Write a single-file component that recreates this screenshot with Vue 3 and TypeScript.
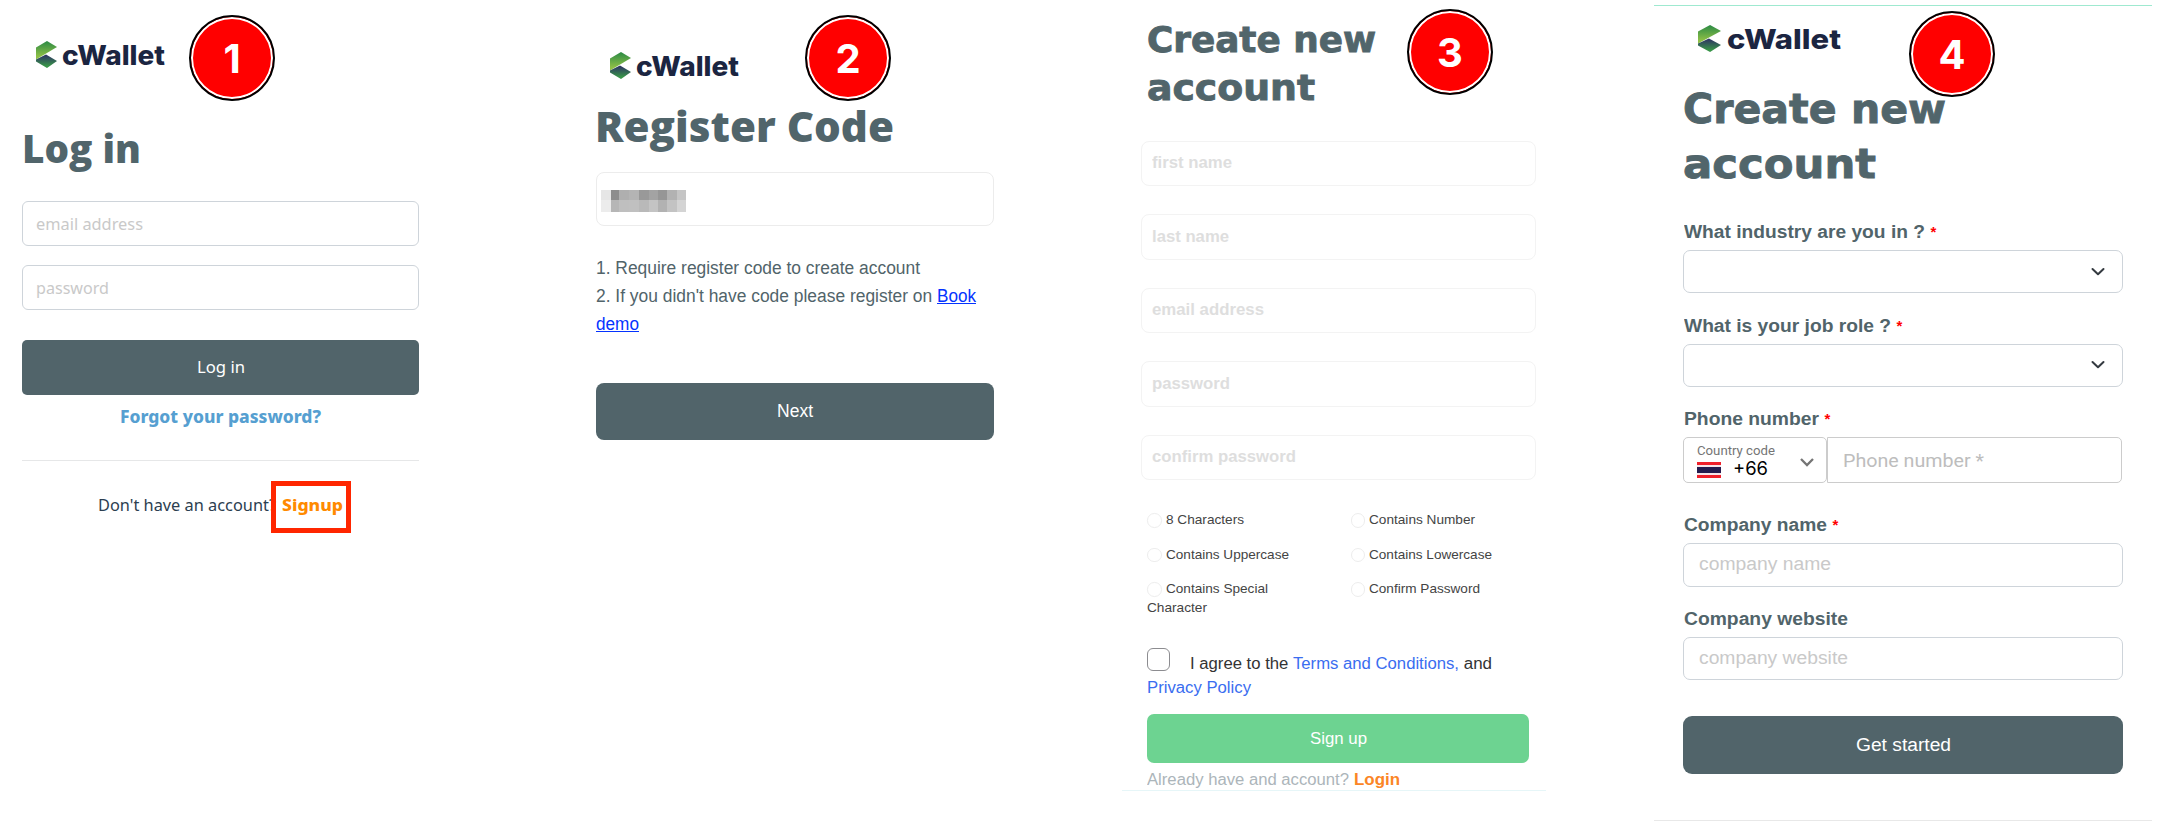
<script setup lang="ts">
import type { Directive } from 'vue'

interface Field {
  label: string
  width: number
}

/* Condenses or widens a line of text to the given advance width. */
const vFit: Directive<HTMLElement, number> = {
  mounted(el, binding) {
    const natural = el.getBoundingClientRect().width
    el.style.width = `${binding.value}px`
    el.style.transform = `scaleX(${binding.value / natural})`
  },
}

const signupFields: Field[] = [
  { label: 'first name', width: 80 },
  { label: 'last name', width: 77 },
  { label: 'email address', width: 112 },
  { label: 'password', width: 78 },
  { label: 'confirm password', width: 144 },
]

const rules: Field[][] = [
  [{ label: '8 Characters', width: 78 }, { label: 'Contains Number', width: 106 }],
  [{ label: 'Contains Uppercase', width: 123 }, { label: 'Contains Lowercase', width: 123 }],
  [{ label: 'Contains Special', width: 102 }, { label: 'Confirm Password', width: 111 }],
]

const questions: Field[] = [
  { label: 'What industry are you in ?', width: 241 },
  { label: 'What is your job role ?', width: 207 },
]

const mosaic: string[] = [
  '#e6e6e6', '#8d8d8d', '#afafaf', '#b4b4b4', '#999999', '#a3a3a3', '#969696', '#b2b2b2', '#c5c5c5',
  '#ececec', '#b6b6b6', '#bfbfbf', '#c0c0c0', '#b9b9b9', '#c4c4c4', '#b2b2b2', '#c3c3c3', '#d4d4d4',
]
</script>

<template>
  <svg class="defs" width="0" height="0">
    <defs>
      <linearGradient id="leaf" x1="0" y1="0" x2="0" y2="1">
        <stop offset="0" stop-color="#2b8a45" />
        <stop offset="0.85" stop-color="#8fc046" />
      </linearGradient>
      <linearGradient id="base" x1="0" y1="0" x2="0" y2="1">
        <stop offset="0.1" stop-color="#2f3a62" />
        <stop offset="0.85" stop-color="#389448" />
      </linearGradient>
      <symbol id="mark" viewBox="0 0 21 27" preserveAspectRatio="none">
        <path d="M11 0 21 6 0 18.500V6.500Z" fill="url(#leaf)" />
        <path d="M10 13.500 21 20 11 27 0 20.500V18.500Z" fill="url(#base)" />
      </symbol>
    </defs>
  </svg>
  <main class="board">
    <section class="panel login">
      <div class="logo">
        <svg class="mark"><use href="#mark" /></svg>
        <span v-fit="103" class="fit brand">cWallet</span>
      </div>
      <div class="badge">1</div>
      <h1><span v-fit="119" class="fit">Log in</span></h1>
      <div class="field"><span v-fit="107" class="fit">email address</span></div>
      <div class="field"><span v-fit="73" class="fit">password</span></div>
      <button class="btn"><span v-fit="48" class="fit">Log in</span></button>
      <a class="forgot"><span v-fit="201" class="fit">Forgot your password?</span></a>
      <hr>
      <p class="ask">
        <span v-fit="178" class="fit">Don't have an account?</span>
        <b v-fit="61" class="fit">Signup</b>
      </p>
      <div class="highlight"></div>
    </section>

    <section class="panel register">
      <div class="logo">
        <svg class="mark"><use href="#mark" /></svg>
        <span v-fit="103" class="fit brand">cWallet</span>
      </div>
      <div class="badge">2</div>
      <h1><span v-fit="299" class="fit">Register Code</span></h1>
      <div class="code">
        <div class="mosaic">
          <i v-for="(shade, n) in mosaic" :key="n" :style="{ background: shade }"></i>
        </div>
      </div>
      <div class="notes">
        <div><span v-fit="324" class="fit">1. Require register code to create account</span></div>
        <div>
          <span v-fit="341" class="fit">2. If you didn't have code please register on </span><a v-fit="39" class="fit">Book</a>
        </div>
        <div><a v-fit="43" class="fit">demo</a></div>
      </div>
      <button class="btn"><span v-fit="36" class="fit">Next</span></button>
    </section>

    <section class="panel signup">
      <div class="badge">3</div>
      <h1>
        <span v-fit="229" class="fit">Create new</span><br>
        <span v-fit="168" class="fit">account</span>
      </h1>
      <div class="fields">
        <div v-for="f in signupFields" :key="f.label" class="field">
          <span v-fit="f.width" class="fit">{{ f.label }}</span>
        </div>
      </div>
      <div class="rules">
        <template v-for="(row, r) in rules" :key="r">
          <div v-for="rule in row" :key="rule.label" class="rule">
            <i class="dot"></i><span v-fit="rule.width" class="fit">{{ rule.label }}</span>
          </div>
        </template>
        <div class="wrapped"><span v-fit="60" class="fit">Character</span></div>
      </div>
      <div class="agree">
        <i class="box"></i>
        <div class="terms">
          <span v-fit="103" class="fit">I agree to the </span><a v-fit="166" class="fit">Terms and Conditions,</a><span v-fit="33" class="fit"> and</span>
        </div>
        <a v-fit="104" class="fit">Privacy Policy</a>
      </div>
      <button class="btn"><span v-fit="57" class="fit">Sign up</span></button>
      <p class="already">
        <span v-fit="202" class="fit">Already have and account?</span>
        <b v-fit="46" class="fit">Login</b>
      </p>
      <div class="edge"></div>
    </section>

    <section class="panel profile">
      <div class="content">
        <div class="logo">
          <svg class="mark"><use href="#mark" /></svg>
          <span v-fit="114" class="fit brand">cWallet</span>
        </div>
        <h1>
          <span v-fit="263" class="fit">Create new</span><br>
          <span v-fit="193" class="fit">account</span>
        </h1>
        <div class="badge">4</div>
        <template v-for="q in questions" :key="q.label">
          <label><span v-fit="q.width" class="fit">{{ q.label }}</span><em>*</em></label>
          <div class="field select">
            <svg width="14" height="10" viewBox="0 0 14 10"><path class="chevron" d="M1.500 2 7 7.300 12.500 2" /></svg>
          </div>
        </template>
        <label><span v-fit="135" class="fit">Phone number</span><em>*</em></label>
        <div class="phone">
          <div class="country">
            <small><span v-fit="78" class="fit">Country code</span></small>
            <div class="dial">
              <i class="flag"></i>
              <span v-fit="35" class="fit">+66</span>
            </div>
            <svg width="16" height="11" viewBox="0 0 16 11"><path d="M2 2 8 8 14 2" /></svg>
          </div>
          <div class="number"><span v-fit="141" class="fit">Phone number *</span></div>
        </div>
        <label class="company"><span v-fit="143" class="fit">Company name</span><em>*</em></label>
        <div class="field"><span v-fit="132" class="fit">company name</span></div>
        <label><span v-fit="164" class="fit">Company website</span></label>
        <div class="field"><span v-fit="149" class="fit">company website</span></div>
        <button class="btn"><span v-fit="95" class="fit">Get started</span></button>
      </div>
    </section>
  </main>
</template>

<style>
body {
  margin: 0;
  background: #fff;
}
</style>

<style scoped>
.defs {
  position: absolute;
}
.board {
  display: grid;
  grid-template-columns: 574px 548px 532px 498px;
  width: 2176px;
  height: 836px;
  overflow: hidden;
  font-family: "Liberation Sans", Arial, sans-serif;
  color: #51646a;
}
.panel {
  position: relative;
  box-sizing: border-box;
  height: 836px;
}
.fit {
  display: inline-block;
  white-space: pre;
  text-align: left;
  transform-origin: 0 50%;
}
h1 {
  margin: 0;
  font-family: "Open Sans", "Noto Sans", sans-serif;
  font-weight: 800;
  color: #51656b;
}
hr {
  border: 0;
  margin: 32px 0 0;
  height: 1px;
  background: #e6e7e8;
}
.logo {
  display: flex;
  align-items: center;
  height: 27px;
}
.mark {
  width: 21px;
  height: 27px;
  margin-right: 5.5px;
}
.brand {
  font: 800 27.500px/28px Inter, sans-serif;
  color: #1b2541;
}
.badge {
  position: absolute;
  box-sizing: border-box;
  width: 86px;
  height: 86px;
  border: 2px solid #000;
  border-radius: 50%;
  background: #f00;
  box-shadow: inset 0 0 0 2px #fff;
  color: #fff;
  font: 700 40px/83px Inter, sans-serif;
  text-align: center;
}
.field {
  box-sizing: border-box;
  display: flex;
  align-items: center;
  border: 1px solid #ced4da;
  border-radius: 6px;
  color: #c9c9c9;
}
.btn {
  display: flex;
  align-items: center;
  justify-content: center;
  width: 100%;
  border: 0;
  padding: 0;
  background: #51646a;
  color: #fff;
  font-family: inherit;
}

.login {
  padding: 41px 155px 0 22px;
  font-family: "Noto Sans", sans-serif;
}
.login .logo {
  margin-left: 13.500px;
}
.login .badge {
  left: 189px;
  top: 15px;
}
.login h1 {
  margin: 60px 0 33px;
  font-size: 38px;
  line-height: 40px;
}
.login .field {
  height: 45px;
  padding: 0 0 1px 13px;
  margin-bottom: 19px;
  font-size: 16.500px;
}
.login .btn {
  height: 55px;
  padding-bottom: 2px;
  margin-top: 30px;
  border-radius: 5px;
  font-size: 17px;
}
.forgot {
  display: block;
  margin-top: 9px;
  text-align: center;
  font-size: 17.500px;
  line-height: 24px;
  font-weight: 800;
  color: #569fd1;
}
.ask {
  display: flex;
  gap: 6px;
  margin: 32px 0 0 76px;
  font-size: 16.500px;
  line-height: 24px;
  color: #2c3e50;
}
.ask b {
  font-weight: 800;
  color: #ff8a00;
}
.highlight {
  position: absolute;
  left: 271px;
  top: 480.500px;
  width: 70px;
  height: 42px;
  border: 5.500px solid #ff2600;
}

.register {
  padding: 52px 128px 0 22px;
}
.register .logo {
  margin-left: 13.500px;
}
.register .badge {
  left: 231px;
  top: 15px;
}
.register h1 {
  margin: 22px 0 21px -1px;
  font-size: 42px;
  line-height: 50px;
}
.code {
  box-sizing: border-box;
  height: 53.500px;
  padding: 17px 0 0 4px;
  border: 1px solid #ececec;
  border-radius: 8px;
}
.mosaic {
  display: grid;
  grid-template-columns: 10px 8px 10px 10px 10px 9px 9px 10px 9px;
  grid-template-rows: 10px 12px;
}
.notes {
  margin-top: 28px;
  font-size: 17.600px;
  line-height: 28px;
}
.notes div {
  height: 28px;
}
.notes a {
  color: #0433ff;
  text-decoration: underline;
}
.register .btn {
  height: 57.500px;
  margin-top: 45px;
  border-radius: 8px;
  font-size: 18px;
}

.signup {
  padding: 14.600px 125px 0 25px;
}
.signup .badge {
  left: 285px;
  top: 9px;
}
.signup h1,
.profile h1 {
  font-family: "DejaVu Sans", sans-serif;
  font-weight: 700;
  -webkit-text-stroke: 0.9px #51656b;
}
.signup h1 {
  padding-top: 1.500px;
  font-size: 36px;
  line-height: 48px;
}
.fields {
  display: grid;
  gap: 28px;
  margin: 28.500px -7px 30px -6px;
}
.fields .field {
  height: 45.500px;
  padding-left: 10px;
  border: 1.500px solid #f3f3f3;
  border-radius: 8px;
  font-size: 16px;
  font-weight: 700;
  color: #dedede;
}
.rules {
  display: grid;
  grid-template-columns: 203.500px 1fr;
  grid-template-rows: 34.600px 34.600px 18.700px 18.700px;
  font-size: 13px;
  line-height: 19px;
  color: #444;
}
.rule {
  display: flex;
  height: 19px;
}
.dot {
  box-sizing: border-box;
  width: 14.500px;
  height: 14.500px;
  margin: 3px 4px 0 0;
  border: 1.500px solid #ededed;
  border-radius: 50%;
}
.agree {
  position: relative;
  margin-top: 35px;
  font-size: 16px;
  line-height: 24px;
  color: #333;
}
.agree a {
  color: #3a6df0;
}
.terms {
  height: 24px;
  padding-left: 43px;
}
.box {
  position: absolute;
  left: 0;
  top: -3.500px;
  box-sizing: border-box;
  width: 23px;
  height: 22.500px;
  border: 1.500px solid #8c8c90;
  border-radius: 6px;
}
.signup .btn {
  height: 49.500px;
  margin-top: 14px;
  padding-top: 1px;
  border-radius: 7px;
  background: #6dd391;
  font-size: 16px;
}
.already {
  display: flex;
  gap: 5px;
  margin: 7px 0 0;
  font-size: 16px;
  line-height: 20px;
  color: #acb5ba;
}
.already b {
  color: #fb8526;
}
.edge {
  height: 1px;
  margin: 0 -17px 0 -25px;
  background: #e6f6f8;
}

.profile {
  height: 816px;
  padding: 19px 29px 0;
  margin-top: 5px;
  border-top: 1px solid #9fe9d0;
  border-bottom: 1px solid #e8e8e8;
}
.profile .logo {
  margin-left: 15px;
}
.profile .mark {
  width: 23px;
  margin-right: 6px;
}
.profile .badge {
  left: 255px;
  top: 5px;
}
.profile h1 {
  margin: 28px 0 28px;
  padding-top: 2px;
  font-size: 41px;
  line-height: 55px;
}
.profile label {
  display: flex;
  height: 24px;
  margin: 20.500px 0 6px 1px;
  font-size: 18px;
  font-weight: 700;
  line-height: 24px;
}
.profile h1 ~ label:first-of-type {
  margin-top: 27.500px;
}
.profile label.company {
  margin-top: 30.500px;
}
label em {
  margin-left: 5.500px;
  font-size: 15px;
  font-style: normal;
  color: #f00;
}
.profile .field {
  height: 43.200px;
  padding-left: 15px;
  border-radius: 7px;
  font-size: 18px;
}
.profile .select {
  justify-content: flex-end;
  padding-right: 17px;
}
.chevron,
.country path {
  fill: none;
  stroke: #343a40;
  stroke-width: 2;
  stroke-linecap: round;
  stroke-linejoin: round;
}
.phone {
  display: flex;
  width: 439px;
  height: 45.500px;
}
.country,
.number {
  box-sizing: border-box;
  border: 1px solid #ccc;
  border-radius: 5px;
}
.country {
  position: relative;
  width: 144px;
  padding: 4px 0 0 13px;
}
.country small {
  display: block;
  font-family: Roboto, sans-serif;
  font-size: 12.500px;
  line-height: 17px;
  color: #757575;
}
.country svg {
  position: absolute;
  right: 11px;
  top: 19px;
}
.country path {
  stroke: #757575;
  stroke-width: 2.300;
  stroke-linecap: butt;
  stroke-linejoin: miter;
}
.dial {
  display: flex;
  align-items: center;
  gap: 12px;
  height: 18px;
  font: 400 18.500px/18px Inter, sans-serif;
  color: #000;
}
.flag {
  width: 24px;
  height: 16px;
  margin-top: 3px;
  background: linear-gradient(#f0212b 0 16%, #f7e6ea 16% 32%, #241d4f 32% 68%, #f7e6ea 68% 84%, #f0212b 84%);
}
.number {
  flex: 1;
  display: flex;
  align-items: center;
  padding: 1px 0 0 14.500px;
  border-radius: 0 5px 5px 0;
  font-family: Roboto, sans-serif;
  font-size: 18.500px;
  color: #bdbdbd;
}
.profile .btn {
  height: 57.500px;
  margin-top: 36px;
  border-radius: 9px;
  font-size: 18px;
}
</style>
